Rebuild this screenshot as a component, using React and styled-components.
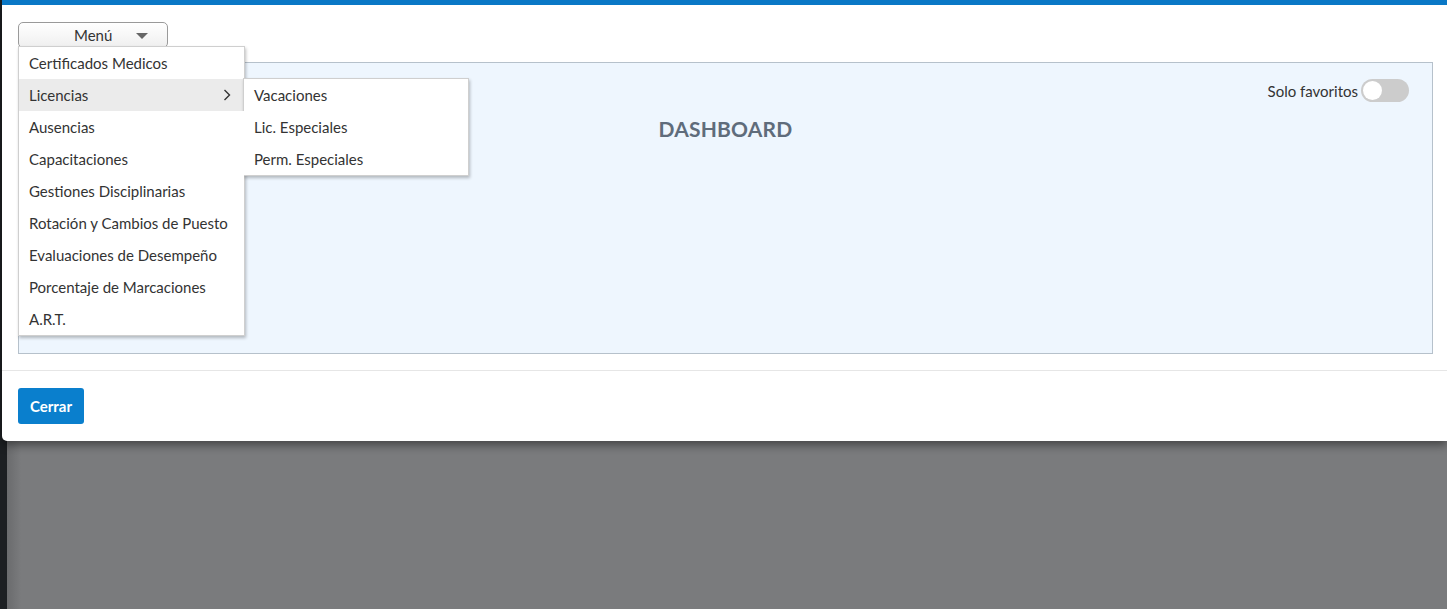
import React, { useState } from "react";
import styled, { createGlobalStyle } from "styled-components";

const GlobalStyle = createGlobalStyle`
  html, body {
    margin: 0;
    padding: 0;
    height: 100%;
    overflow: hidden;
    background: #7a7b7d;
    font-family: "Lato", "Liberation Sans", sans-serif;
  }
`;

const menuItems = [
  { label: "Certificados Medicos" },
  {
    label: "Licencias",
    children: ["Vacaciones", "Lic. Especiales", "Perm. Especiales"],
  },
  { label: "Ausencias" },
  { label: "Capacitaciones" },
  { label: "Gestiones Disciplinarias" },
  { label: "Rotación y Cambios de Puesto" },
  { label: "Evaluaciones de Desempeño" },
  { label: "Porcentaje de Marcaciones" },
  { label: "A.R.T." },
];

const App = () => {
  const [open] = useState("Licencias");
  const [favs, setFavs] = useState(false);

  return (
    <Screen>
      <GlobalStyle />
      <SideStrip />
      <Stage>
        <Modal>
          <Body>
            <MenuWrap>
              <MenuButton>
                Menú
                <Caret />
              </MenuButton>
              <Dropdown>
                {menuItems.map((m) => (
                  <ItemRow key={m.label}>
                    <Item $active={open === m.label}>
                      {m.label}
                      {m.children && (
                        <svg width="10" height="14" viewBox="0 0 10 14">
                          <path
                            d="M2.5 2 L7.5 7 L2.5 12"
                            fill="none"
                            stroke="#333"
                            strokeWidth="1.4"
                          />
                        </svg>
                      )}
                    </Item>
                    {m.children && open === m.label && (
                      <SubMenu>
                        {m.children.map((c) => (
                          <Item key={c}>{c}</Item>
                        ))}
                      </SubMenu>
                    )}
                  </ItemRow>
                ))}
              </Dropdown>
            </MenuWrap>
            <Dashboard>
              <Title>DASHBOARD</Title>
              <Favs>
                Solo favoritos
                <Toggle $on={favs} onClick={() => setFavs(!favs)} />
              </Favs>
            </Dashboard>
          </Body>
          <Footer>
            <CloseButton>Cerrar</CloseButton>
          </Footer>
        </Modal>
        <Backdrop />
      </Stage>
    </Screen>
  );
};

const Screen = styled.div`
  display: flex;
  height: 609px;
`;

const SideStrip = styled.div`
  width: 7px;
  flex-shrink: 0;
  background: #1c1f22;
`;

const Stage = styled.div`
  flex: 1;
  display: flex;
  flex-direction: column;
  margin-left: -5px;
  position: relative;
`;

const Modal = styled.div`
  background: #fff;
  border-top: 5px solid #0a78c6;
  border-radius: 0 0 0 5px;
  box-shadow: 0 4px 10px rgba(0, 0, 0, 0.45);
  position: relative;
  z-index: 1;
`;

const Backdrop = styled.div`
  flex: 1;
  margin-left: 5px;
  background: linear-gradient(90deg, #6a6b6d 0px, #7a7b7d 14px);
`;

const Body = styled.div`
  padding: 17px 14px 16px 16px;
  border-bottom: 1px solid #e6e6e6;
`;

const MenuWrap = styled.div`
  position: relative;
  width: 150px;
  z-index: 5;
`;

const MenuButton = styled.button`
  width: 150px;
  height: 26px;
  display: flex;
  align-items: center;
  justify-content: flex-start;
  padding: 0 0 0 55px;
  border: 1px solid #9a9a9a;
  border-radius: 5px;
  background: linear-gradient(#ffffff, #efefef);
  font-family: inherit;
  font-size: 15px;
  color: #333;
  position: relative;
  & > span {
    position: absolute;
    right: 19px;
    top: 10px;
  }
`;

const Caret = styled.span`
  width: 0;
  height: 0;
  border-left: 6px solid transparent;
  border-right: 6px solid transparent;
  border-top: 6px solid #666;
`;

const Dropdown = styled.div`
  position: absolute;
  top: 24px;
  left: 0;
  width: 225px;
  background: #fff;
  border: 1px solid #cfcfcf;
  box-shadow: 1px 2px 3px rgba(0, 0, 0, 0.25);
`;

const ItemRow = styled.div`
  position: relative;
`;

const Item = styled.div`
  height: 32px;
  display: flex;
  align-items: center;
  justify-content: space-between;
  padding: 0 12px 0 10px;
  font-size: 15px;
  color: #333;
  white-space: nowrap;
  background: ${(p) => (p.$active ? "#ebebeb" : "#fff")};
`;

const SubMenu = styled.div`
  position: absolute;
  top: -1px;
  left: 224px;
  width: 224px;
  background: #fff;
  border: 1px solid #cfcfcf;
  box-shadow: 1px 2px 3px rgba(0, 0, 0, 0.25);
`;

const Dashboard = styled.div`
  margin-top: 14px;
  height: 290px;
  background: #eef6fe;
  border: 1px solid #b6c1cb;
  display: flex;
  justify-content: center;
  position: relative;
`;

const Title = styled.div`
  margin-top: 53px;
  font-size: 21px;
  font-weight: 700;
  color: #5f6c7b;
  letter-spacing: 0.2px;
`;

const Favs = styled.div`
  position: absolute;
  top: 16px;
  right: 23px;
  display: flex;
  align-items: center;
  gap: 3px;
  font-size: 15px;
  color: #333;
`;

const Toggle = styled.div`
  width: 48px;
  height: 23px;
  border-radius: 12px;
  background: ${(p) => (p.$on ? "#0a78c6" : "#cccccc")};
  position: relative;
  cursor: pointer;
  &::after {
    content: "";
    position: absolute;
    top: 2px;
    left: ${(p) => (p.$on ? "27px" : "2px")};
    width: 19px;
    height: 19px;
    border-radius: 50%;
    background: #fff;
  }
`;

const Footer = styled.div`
  padding: 17px 16px 17px;
`;

const CloseButton = styled.button`
  width: 66px;
  height: 36px;
  border: none;
  border-radius: 3px;
  background: #0a7fcd;
  color: #fff;
  font-family: inherit;
  font-size: 15px;
  font-weight: 700;
`;

export default App;
